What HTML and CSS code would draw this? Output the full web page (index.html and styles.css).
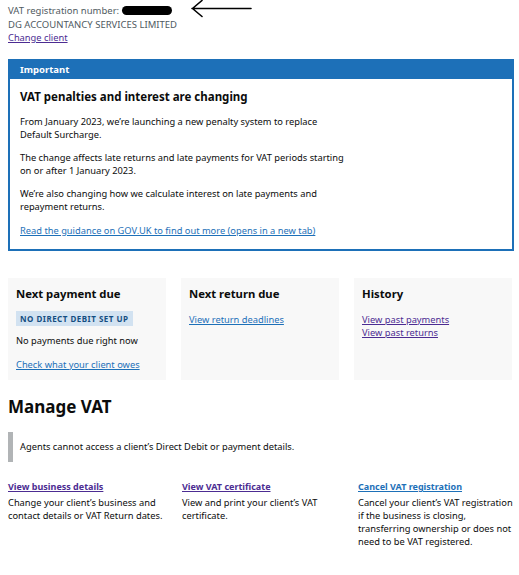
FILE: index.html
```html
<!DOCTYPE html>
<html lang="en">
<head>
<meta charset="utf-8">
<title>VAT overview</title>
<link rel="stylesheet" href="styles.css">
</head>
<body>
<div class="page">
  <div class="client">
    <p class="vrn">VAT registration number: <span class="redact"></span><svg class="arrow" width="62" height="20" viewBox="0 0 62 20"><path d="M1 9.5 H60 M11 1.5 L1.5 9.5 L11 17.5" fill="none" stroke="#000" stroke-width="1.6" stroke-linecap="round" stroke-linejoin="round"/></svg></p>
    <p class="name">DG ACCOUNTANCY SERVICES LIMITED</p>
    <a class="link visited" href="#">Change client</a>
  </div>

  <div class="banner">
    <div class="banner-title">Important</div>
    <div class="banner-body">
      <h2 class="banner-heading">VAT penalties and interest are changing</h2>
      <p class="body">From January 2023, we’re launching a new penalty system to replace<br>Default Surcharge.</p>
      <p class="body">The change affects late returns and late payments for VAT periods starting<br>on or after 1 January 2023.</p>
      <p class="body">We’re also changing how we calculate interest on late payments and<br>repayment returns.</p>
      <a class="link" href="#">Read the guidance on GOV.UK to find out more (opens in a new tab)</a>
    </div>
  </div>

  <div class="cards">
    <div class="card">
      <h3 class="card-heading">Next payment due</h3>
      <span class="tag">NO DIRECT DEBIT SET UP</span>
      <p class="body">No payments due right now</p>
      <a class="link" href="#">Check what your client owes</a>
    </div>
    <div class="card">
      <h3 class="card-heading">Next return due</h3>
      <a class="link" href="#">View return deadlines</a>
    </div>
    <div class="card">
      <h3 class="card-heading">History</h3>
      <a class="link visited" href="#">View past payments</a>
      <a class="link visited" href="#">View past returns</a>
    </div>
  </div>

  <h2 class="manage">Manage VAT</h2>
  <div class="inset">Agents cannot access a client’s Direct Debit or payment details.</div>

  <div class="parts">
    <div class="part">
      <a class="link bold visited" href="#">View business details</a>
      <p class="body">Change your client’s business and contact details or VAT Return dates.</p>
    </div>
    <div class="part">
      <a class="link bold visited" href="#">View VAT certificate</a>
      <p class="body">View and print your client’s VAT certificate.</p>
    </div>
    <div class="part">
      <a class="link bold" href="#">Cancel VAT registration</a>
      <p class="body">Cancel your client’s VAT registration if the business is closing, transferring ownership or does not need to be VAT registered.</p>
    </div>
  </div>
</div>
</body>
</html>
```

FILE: styles.css
```css
* { box-sizing: border-box; }
body {
  margin: 0;
  background: #fff;
  font-family: "Noto Sans", Arial, sans-serif;
  color: #0b0c0c;
}
p, h2, h3 { margin: 0; }
.page { padding: 1px 8px 0 8px; }

.client { display: flex; flex-direction: column; align-items: flex-start; font-size: 9.5px; line-height: 13px; color: #505a5f; }
.vrn { display: flex; align-items: center; }
.redact { display: inline-block; width: 50px; height: 9px; background: #000; border-radius: 5px; margin-left: 3px; }
.arrow { margin-left: 19px; margin-top: -2px; }
.name { margin-top: -1px; }

.link { color: #1d70b8; text-decoration: underline; text-underline-offset: 1px; font-size: 9.3px; line-height: 13px; }
.link.visited { color: #4c2c92; }
.link.bold { font-weight: 700; font-size: 9px; }
.body { font-size: 9.3px; line-height: 12.5px; color: #0b0c0c; }

.banner { margin-top: 15px; margin-right: -3px; border: 2px solid #1d70b8; }
.banner-title { background: #1d70b8; color: #fff; font-weight: 700; font-size: 9.5px; line-height: 18px; padding: 0 10px; }
.banner-body { padding: 9px 10px 12px 10px; display: flex; flex-direction: column; align-items: flex-start; }
.banner-heading { font-size: 11.5px; line-height: 18px; font-weight: 700; margin-bottom: 10px; }
.banner-body .body { margin-bottom: 11px; }

.cards { margin-top: 27px; display: grid; grid-template-columns: repeat(3, 158px); column-gap: 15px; margin-right: -1px; }
.card { background: #f8f8f8; height: 102px; padding: 7px 8px; display: flex; flex-direction: column; align-items: flex-start; }
.card-heading { font-size: 11.3px; line-height: 17px; font-weight: 700; margin-bottom: 11px; }
.tag { background: #d2e2f1; color: #144e81; font-weight: 700; font-size: 8px; letter-spacing: 0.5px; line-height: 13px; padding: 1px 4px; margin-top: -2px; margin-bottom: 9px; }
.card .body { margin-bottom: 10px; }

.manage { font-size: 17px; line-height: 24px; font-weight: 700; margin-top: 15px; }
.inset { margin-top: 13px; border-left: 5px solid #b1b4b6; padding: 9px 0 9px 7px; font-size: 9.3px; line-height: 12px; color: #0b0c0c; }

.parts { margin-top: 18px; display: grid; grid-template-columns: 166px 168px 160px; column-gap: 8px; }
.part { display: flex; flex-direction: column; align-items: flex-start; }
.part .body { margin-top: 3px; line-height: 13px; }
```
